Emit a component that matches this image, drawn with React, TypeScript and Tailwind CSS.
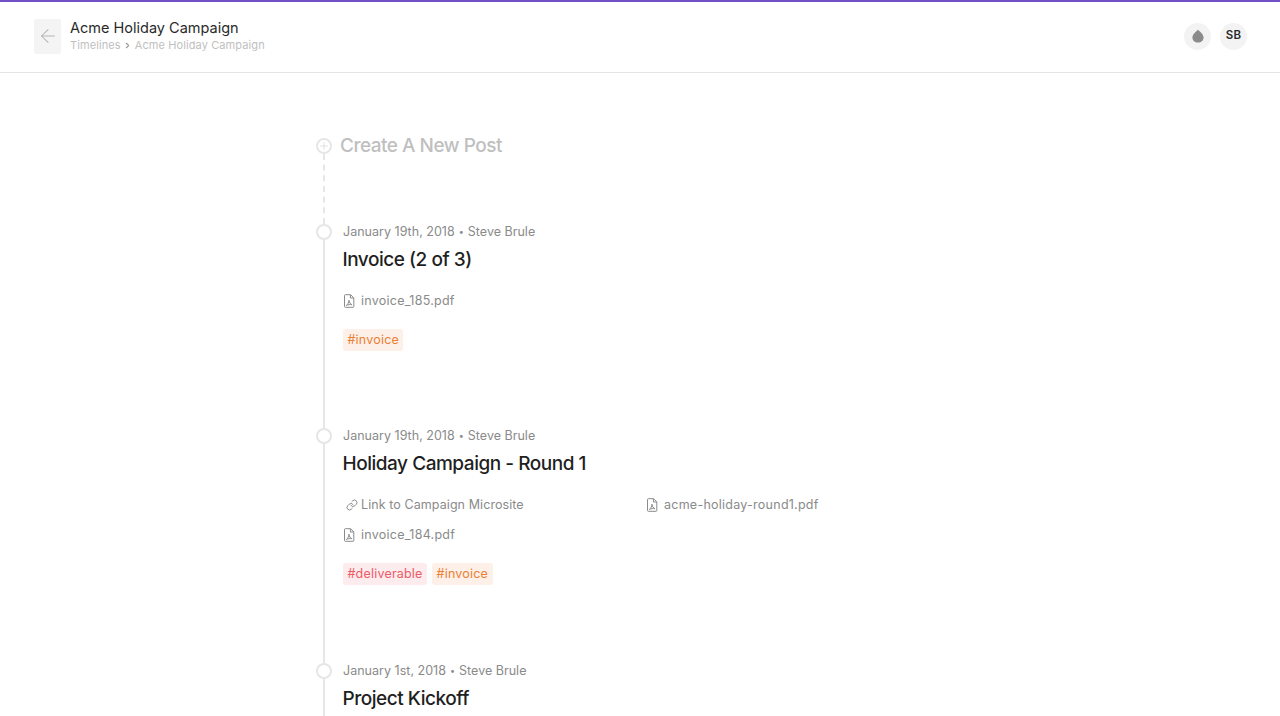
import React from 'react';
import { ArrowLeft, ChevronRight, Link as LinkIcon, Plus } from 'lucide-react';

const PdfIcon = () => <svg width="12" height="14" viewBox="0 0 12 14" fill="none" stroke="#8a8a8a" strokeWidth="1" className="shrink-0">
    <path d="M1.5 1.5C1.5 1 1.8.7 2.3.7H7.6L10.8 3.9V12.6C10.8 13 10.5 13.3 10 13.3H2.3C1.8 13.3 1.5 13 1.5 12.5Z" />
    <path d="M7.4.8V4H10.7" />
    <path d="M3.4 11.4C4.6 10.6 5.8 8.6 6 6.2C6.2 8.4 7.2 10 8.9 10.7C7.2 10.4 5 10.6 3.4 11.4Z" />
  </svg>;

const FileRow = ({ name }: { name: string }) => <div className="flex items-center gap-[6px] h-[30px] text-[12.5px] tracking-[0.25px] text-[#8a8a8a]">
    <PdfIcon />
    <span>{name}</span>
  </div>;

const Tag = ({ label, color }: { label: string; color: 'orange' | 'red' }) => <span className={`inline-flex items-center h-[22px] px-[4.5px] rounded-[3px] text-[12.5px] tracking-[0.2px] ${color === 'orange' ? 'bg-[#fdf0e8] text-[#ea8034]' : 'bg-[#fdecee] text-[#ee5a66]'}`}>
    {label}
  </span>;

const Post = ({ date, title, height, children }: { date: string; title: string; height: string; children?: React.ReactNode }) => <div className={`flex ${height}`}>
    <div className="flex flex-col items-center w-4 shrink-0">
      <div className="w-4 h-4 rounded-full border-2 border-[#e6e6e6] bg-white shrink-0" />
      <div className="w-[2px] flex-1 bg-[#e6e6e6]" />
    </div>
    <div className="pl-[11px] flex-1 min-w-0">
      <div className="h-4 flex items-center gap-[4px] text-[12.5px] tracking-[0.02px] text-[#8a8a8a]">
        <span>{date}</span>
        <span className="text-[9px]">•</span>
        <span>Steve Brule</span>
      </div>
      <h2 className="mt-[5px] -ml-[0.5px] h-[30px] flex items-center text-[19px] font-medium text-[#1f1f1f] tracking-[-0.47px]">{title}</h2>
      {children}
    </div>
  </div>;

export default function App() {
  return <div className="h-screen overflow-hidden bg-white border-t-[2px] border-[#7350c8] font-['Inter',sans-serif]">
      <header className="h-[71px] border-b border-[#e4e4e4] flex items-center justify-between pl-[34px] pr-[33px] pb-[2px]">
        <div className="flex items-center gap-[9px]">
          <button className="w-[27px] h-[35px] bg-[#f4f4f4] rounded-[2px] flex items-center justify-center">
            <ArrowLeft size={22} strokeWidth={1.1} color="#b4b4b4" />
          </button>
          <div>
            <div className="text-[14.5px] leading-[18px] text-[#2a2a2a]">Acme Holiday Campaign</div>
            <div className="mt-[1px] flex items-center text-[11px] leading-[15px] tracking-[0.1px] text-[#c0c0c0]">
              Timelines
              <ChevronRight size={9} strokeWidth={3} color="#9a9a9a" className="mx-[2.5px]" />
              Acme Holiday Campaign
            </div>
          </div>
        </div>
        <div className="flex items-center gap-[9px]">
          <div className="w-[27px] h-[27px] rounded-full bg-[#f3f3f3] flex items-center justify-center">
            <svg width="12" height="14" viewBox="0 0 12 14"><path d="M6 .4C7 2 11.6 4.800 11.600 8.400C11.600 11.500 9.100 13.600 6 13.600C2.900 13.600.4 11.500.4 8.400C.4 4.800 5 2 6 .4Z" fill="#8b8b8b" /></svg>
          </div>
          <div className="w-[27px] h-[27px] rounded-full bg-[#f3f3f3] flex items-center justify-center text-[11.5px] font-semibold tracking-[0.3px] text-[#2a2a2a]">SB</div>
        </div>
      </header>
      <main className="pl-[316px] pt-[65px]">
        <div className="flex h-[86px]">
          <div className="flex flex-col items-center w-4 shrink-0">
            <div className="w-4 h-4 rounded-full border-2 border-[#e6e6e6] bg-white flex items-center justify-center shrink-0">
              <Plus size={12} strokeWidth={1.25} color="#d0d0d0" />
            </div>
            <div className="flex-1 border-l-2 border-dashed border-[#e6e6e6]" />
          </div>
          <h1 className="pl-2 h-4 flex items-center text-[19px] font-medium text-[#bfbfbf] tracking-[-0.5px]">Create A New Post</h1>
        </div>
        <Post date="January 19th, 2018" title="Invoice (2 of 3)" height="h-[204px]">
          <div className="mt-[11px]">
            <FileRow name="invoice_185.pdf" />
          </div>
          <div className="mt-[13px] flex gap-[5px]">
            <Tag label="#invoice" color="orange" />
          </div>
        </Post>
        <Post date="January 19th, 2018" title="Holiday Campaign - Round 1" height="h-[235px]">
          <div className="mt-[11px] grid grid-cols-[303px_1fr]">
            <div className="flex items-center gap-[3px] pl-[3px] h-[30px] text-[12.5px] tracking-[0.08px] text-[#8a8a8a]">
              <LinkIcon size={12} strokeWidth={2} color="#8a8a8a" />
              <span>Link to Campaign Microsite</span>
            </div>
            <FileRow name="acme-holiday-round1.pdf" />
            <FileRow name="invoice_184.pdf" />
          </div>
          <div className="mt-[13px] flex gap-[5px]">
            <Tag label="#deliverable" color="red" />
            <Tag label="#invoice" color="orange" />
          </div>
        </Post>
        <Post date="January 1st, 2018" title="Project Kickoff" height="h-[235px]" />
      </main>
    </div>;
}
